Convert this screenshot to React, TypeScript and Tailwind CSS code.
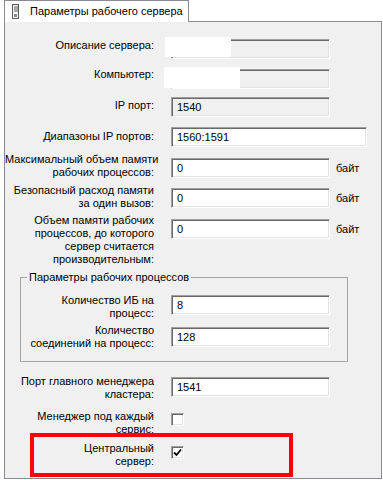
// Server parameters tab (classic Windows look), with redaction blobs and red annotation box.

import type { ReactNode } from 'react';

const sunken =
  'border border-t-[#a0a0a0] border-l-[#a0a0a0] border-b-white border-r-white shadow-[inset_1px_1px_0_#696969,inset_-1px_-1px_0_#e3e3e3]';

function Field({ value = '', wide = false, disabled = false }: { value?: string; wide?: boolean; disabled?: boolean }) {
  return (
    <div
      className={`flex h-[20px] items-center pl-[5px] ${wide ? 'w-[196px]' : 'w-[159px]'} ${disabled ? 'bg-[#f0f0f0]' : 'bg-white'} ${sunken}`}
    >
      {value}
    </div>
  );
}

function Check({ checked = false }: { checked?: boolean }) {
  return (
    <div className={`flex h-[13px] w-[13px] items-center justify-center bg-white ${sunken}`}>
      {checked && (
        <svg width="9" height="9" viewBox="0 0 9 9">
          <path d="M1 4.5 L3.5 7 L8 1.5" fill="none" stroke="#000" strokeWidth="1.8" />
        </svg>
      )}
    </div>
  );
}

function Row({
  lines,
  dy,
  h,
  labelW = 149,
  children,
  unit,
}: {
  lines: string[];
  dy: number;
  h: number;
  labelW?: number;
  children: ReactNode;
  unit?: boolean;
}) {
  return (
    <div className="flex items-start" style={{ height: h }}>
      <div className="shrink-0 whitespace-nowrap text-right leading-[13px]" style={{ width: labelW, marginTop: dy }}>
        {lines.map((l) => (
          <div key={l}>{l}</div>
        ))}
      </div>
      <div className="ml-[17px] flex items-center gap-[6px]">
        {children}
        {unit && <span>байт</span>}
      </div>
    </div>
  );
}

function TabIcon() {
  return (
    <svg width="8" height="15" viewBox="0 0 8 15" className="shrink-0">
      <rect x="0.5" y="0.5" width="6" height="14" fill="#f4f4f4" stroke="#5a5a5a" />
      <line x1="2" y1="3" x2="6" y2="3" stroke="#5a5a5a" />
      <line x1="2" y1="5" x2="6" y2="5" stroke="#5a5a5a" />
      <line x1="2" y1="7" x2="6" y2="7" stroke="#5a5a5a" />
      <rect x="2" y="10" width="3" height="3" fill="#8a8a8a" />
    </svg>
  );
}

export default function App() {
  return (
    <div className="relative h-[480px] w-[383px] overflow-hidden bg-white font-['Liberation_Sans',Arial,sans-serif] text-[11px] text-black">
      <div className="pl-[4px]">
        <div className="relative z-10 -mb-px flex h-[22px] w-[185px] items-center gap-[10px] whitespace-nowrap border border-b-0 border-[#898c95] bg-white pl-[7px]">
          <TabIcon />
          <span>Параметры рабочего сервера</span>
        </div>
      </div>

      <div className="ml-[4px] h-[458px] w-[378px] border border-[#898c95] bg-[#f0f0f0] pt-[17px]">
        <Row lines={['Описание сервера:']} dy={0} h={30}>
          <Field disabled />
        </Row>
        <Row lines={['Компьютер:']} dy={-1} h={28}>
          <Field disabled />
        </Row>
        <Row lines={['IP порт:']} dy={2} h={30}>
          <Field value="1540" disabled />
        </Row>
        <Row lines={['Диапазоны IP портов:']} dy={3} h={31}>
          <Field value="1560:1591" wide />
        </Row>
        <Row lines={['Максимальный объем памяти', 'рабочих процессов:']} dy={-5} h={30} unit>
          <Field value="0" />
        </Row>
        <Row lines={['Безопасный расход памяти', 'за один вызов:']} dy={-4} h={31} unit>
          <Field value="0" />
        </Row>
        <Row
          lines={['Объем памяти рабочих', 'процессов, до которого', 'сервер считается', 'производительным:']}
          dy={-5}
          h={52}
          unit
        >
          <Field value="0" />
        </Row>

        <fieldset className="ml-[15px] h-[91px] w-[328px] border border-[#a5a5a5] pt-[11px]">
          <legend className="ml-[6px] px-[2px] leading-[13px]">Параметры рабочих процессов</legend>
          <Row lines={['Количество ИБ на', 'процесс:']} dy={-1} h={32} labelW={133}>
            <Field value="8" />
          </Row>
          <Row lines={['Количество', 'соединений на процесс:']} dy={-3} h={34} labelW={133}>
            <Field value="128" />
          </Row>
        </fieldset>

        <div className="h-[15px]" />
        <Row lines={['Порт главного менеджера', 'кластера:']} dy={-2} h={36}>
          <Field value="1541" />
        </Row>
        <Row lines={['Менеджер под каждый', 'сервис:']} dy={-3} h={33}>
          <Check />
        </Row>
        <Row lines={['Центральный', 'сервер:']} dy={-4} h={30}>
          <Check checked />
        </Row>
      </div>

      {/* redaction blobs */}
      <div className="absolute left-[165px] top-[37px] h-[20px] w-[66px] bg-white" />
      <div className="absolute left-[164px] top-[67px] h-[21px] w-[76px] bg-white" />

      {/* annotation */}
      <div className="pointer-events-none absolute left-[30px] top-[433px] h-[44px] w-[263px] border-4 border-[#ff0000]" />
    </div>
  );
}
